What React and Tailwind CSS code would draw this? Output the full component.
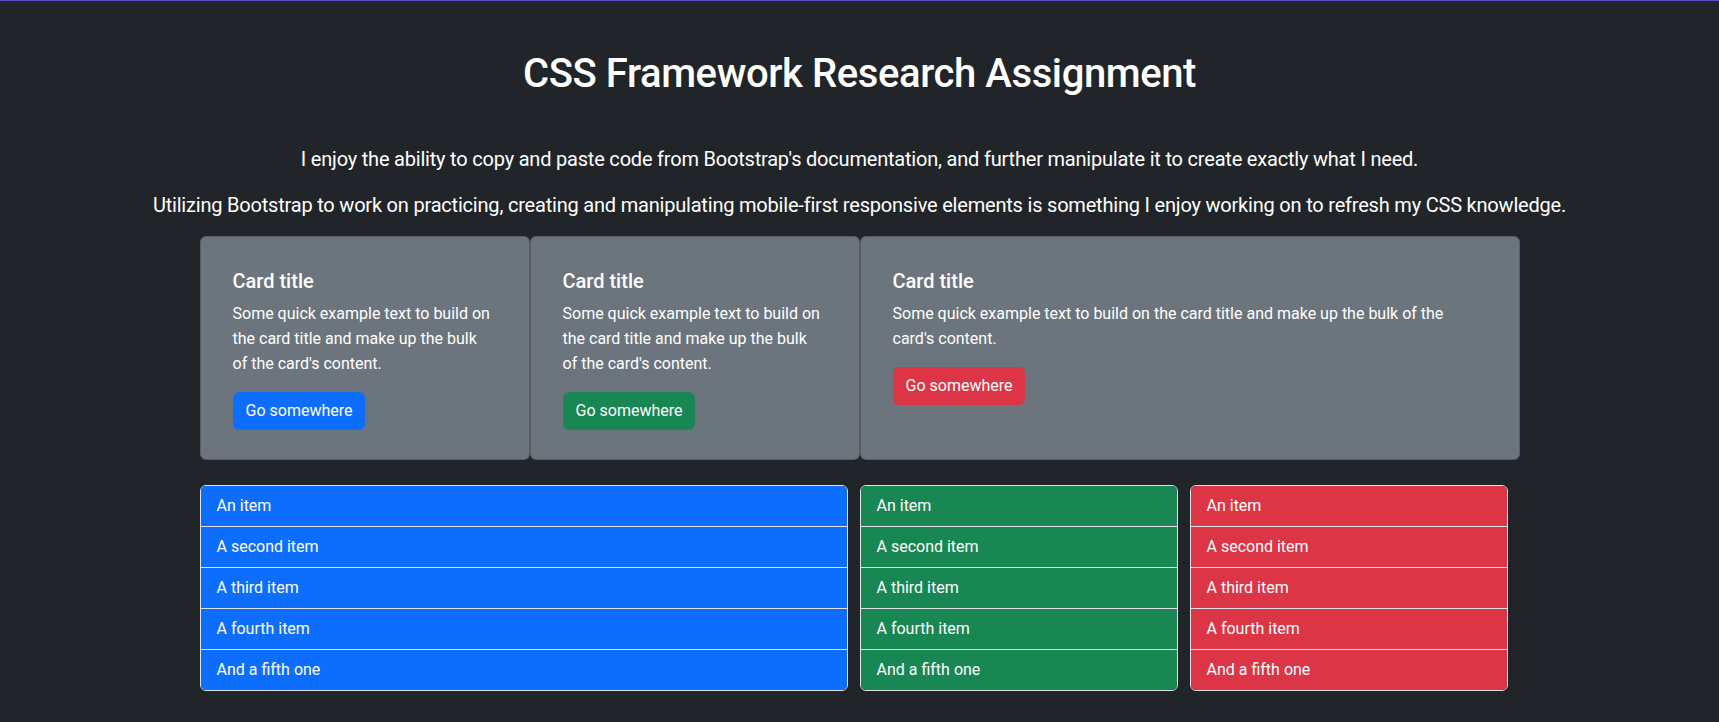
import React from 'react';

const cards = [
  { span: 'col-span-3', btn: 'bg-[#0d6efd]' },
  { span: 'col-span-3', btn: 'bg-[#198754]' },
  { span: 'col-span-6', btn: 'bg-[#dc3545]' },
];

const lists = [
  { span: 'col-span-6', bg: 'bg-[#0d6efd]' },
  { span: 'col-span-3', bg: 'bg-[#198754]' },
  { span: 'col-span-3', bg: 'bg-[#dc3545]' },
];

const items = ['An item', 'A second item', 'A third item', 'A fourth item', 'And a fifth one'];

const Card = ({ span, btn }) => (
  <div className={`${span} rounded-[6px] border border-black/20 bg-[#6c757d] text-white pl-[32px] pr-[38px] pt-[32px] pb-[29px]`}>
    <h5 className="text-[20px] leading-[24px] font-medium mb-[8px]">Card title</h5>
    <p className="text-[16px] leading-[25px] mb-[16px]">
      Some quick example text to build on the card title and make up the bulk of the card's content.
    </p>
    <a href="#" className={`inline-block ${btn} border border-transparent text-white text-[16px] leading-[24px] px-[12px] py-[6px] rounded-[6px]`}>
      Go somewhere
    </a>
  </div>
);

const ListGroup = ({ span, bg }) => (
  <div className={`${span} pr-[12px]`}>
    <ul className="rounded-[6px] border border-[#dee2e6] overflow-hidden">
      {items.map((item, index) => (
        <li
          key={index}
          className={`${bg} text-white text-[16px] leading-[24px] px-[16px] py-[8px] ${index > 0 ? 'border-t border-[#dee2e6]' : ''}`}
        >
          {item}
        </li>
      ))}
    </ul>
  </div>
);

export default function App() {
  return (
    <div className="min-h-[722px] bg-[#212529] border-t border-[#5b4fc9] text-white font-['Roboto','Liberation_Sans',sans-serif]">
      <div className="w-[1320px] mx-auto">
        <h1 className="text-center text-[40px] leading-[48px] font-medium tracking-[-0.01em] pt-[49px] mb-[46px]">
          CSS Framework Research Assignment
        </h1>
        <p className="text-center text-[20px] leading-[30px] tracking-[-0.01em] mb-[16px]">
          I enjoy the ability to copy and paste code from Bootstrap's documentation, and further manipulate it to create exactly what I need.
        </p>
        <p className="text-center text-[20px] leading-[30px] tracking-[-0.01em] mb-[16px] -mx-[100px]">
          Utilizing Bootstrap to work on practicing, creating and manipulating mobile-first responsive elements is something I enjoy working on to refresh my CSS knowledge.
        </p>
        <div className="grid grid-cols-12">
          {cards.map((card, index) => (
            <Card key={index} {...card} />
          ))}
        </div>
        <div className="grid grid-cols-12 mt-[25px]">
          {lists.map((list, index) => (
            <ListGroup key={index} {...list} />
          ))}
        </div>
      </div>
    </div>
  );
}
